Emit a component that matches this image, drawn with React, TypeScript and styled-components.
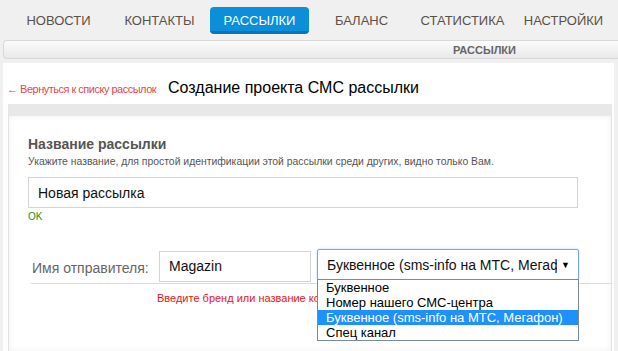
import React from "react";
import styled, { createGlobalStyle } from "styled-components";

const GlobalStyle = createGlobalStyle`
  html, body {
    margin: 0;
    padding: 0;
    background: #f0f0f0;
    font-family: "Liberation Sans", Arial, sans-serif;
    overflow: hidden;
  }
`;

const Page = styled.div`
  width: 618px;
  height: 351px;
  display: flex;
  flex-direction: column;
`;

const Nav = styled.nav`
  display: flex;
  height: 40px;
  padding: 7px 0 0 8px;
  box-sizing: border-box;
`;

const NavItem = styled.a<{ $active?: boolean }>`
  width: ${(p) => (p.$active ? "99px" : "101px")};
  margin-right: ${(p) => (p.$active ? "2px" : "0")};
  height: 27px;
  box-sizing: border-box;
  display: flex;
  align-items: center;
  justify-content: center;
  font-size: 13px;
  text-transform: uppercase;
  color: ${(p) => (p.$active ? "#fff" : "#5a5048")};
  background: ${(p) => (p.$active ? "#0b8fd8" : "transparent")};
  border-bottom: 3px solid ${(p) => (p.$active ? "#0a74b4" : "transparent")};
  border-radius: 4px;
  padding-top: 2px;
`;

const SubBar = styled.div`
  margin: 0 0 4px 3px;
  height: 19px;
  box-sizing: border-box;
  border: 1px solid #d8d8d8;
  border-right: none;
  border-radius: 4px 0 0 4px;
  background: linear-gradient(#fbfbfb, #e9e9e9);
  display: flex;
  align-items: center;
  justify-content: flex-end;
  padding-right: 102px;
  font-size: 11px;
  font-weight: bold;
  color: #666;
`;

const Card = styled.div`
  flex: 1;
  margin: 0 4px 0 3px;
  background: #fff;
  display: flex;
  flex-direction: column;
`;

const CardHead = styled.div`
  display: flex;
  align-items: baseline;
  gap: 12px;
  padding: 16px 0 0 4px;
  height: 41px;
  box-sizing: border-box;
`;

const BackLink = styled.a`
  font-size: 11px;
  letter-spacing: -0.5px;
  color: #e4474b;
`;

const Title = styled.h1`
  margin: 0;
  font-size: 16px;
  font-weight: normal;
  color: #000;
`;

const Panel = styled.div`
  flex: 1;
  margin: 0 2px 0 5px;
  border: 1px solid #e2e2e2;
  border-bottom: none;
  border-top: 12px solid #e8e8e8;
  box-shadow: inset 0 0 6px rgba(0, 0, 0, 0.06);
  padding: 18px 0 0 19px;
  display: flex;
  flex-direction: column;
`;

const FieldTitle = styled.div`
  font-size: 14px;
  font-weight: bold;
  color: #555;
  line-height: 20px;
`;

const Hint = styled.div`
  font-size: 10.4px;
  color: #555;
  margin-top: 2px;
  line-height: 12px;
  white-space: nowrap;
`;

const TextBox = styled.div<{ $w: number }>`
  width: ${(p) => p.$w}px;
  height: 31px;
  box-sizing: border-box;
  border: 1px solid #d4d4d4;
  display: flex;
  align-items: center;
  padding-left: 9px;
  font-size: 14px;
  color: #111;
  background: #fff;
`;

const NameBox = styled(TextBox)`
  margin-top: 9px;
`;

const Ok = styled.div`
  font-size: 10px;
  color: #2a8a2a;
  margin-top: 3px;
`;

const SenderRow = styled.div`
  margin-top: 27px;
  margin-left: 3px;
  display: flex;
  align-items: center;
  height: 34px;
  border-bottom: 1px solid #dcdcdc;
`;

const SenderLabel = styled.div`
  font-size: 14px;
  color: #666;
  width: 127px;
  padding-left: 1px;
  padding-top: 4px;
`;

const SelectWrap = styled.div`
  position: relative;
  margin-left: 6px;
  align-self: flex-start;
`;

const SelectBox = styled.div`
  width: 262px;
  height: 31px;
  box-sizing: border-box;
  border: 1px solid #7ea4e6;
  box-shadow: 0 0 2px #9ec0f5;
  border-radius: 2px;
  display: flex;
  align-items: center;
  justify-content: space-between;
  padding: 0 8px 0 9px;
  font-size: 14px;
  color: #111;
  white-space: nowrap;
  overflow: hidden;
`;

const SelectText = styled.span`
  overflow: hidden;
  width: 230px;
`;

const Arrow = styled.span`
  font-size: 9px;
  color: #000;
`;

const OptionList = styled.ul`
  position: absolute;
  left: 0;
  top: 30px;
  width: 260px;
  margin: 0;
  padding: 0;
  list-style: none;
  border: 1px solid #7a8a99;
  background: #fff;
  z-index: 2;
`;

const Option = styled.li<{ $selected?: boolean }>`
  font-size: 13px;
  line-height: 15px;
  padding-left: 8px;
  white-space: nowrap;
  color: ${(p) => (p.$selected ? "#fff" : "#000")};
  background: ${(p) => (p.$selected ? "#1e90ff" : "#fff")};
`;

const ErrorText = styled.div`
  font-size: 11px;
  color: #e8141c;
  margin: 8px 0 0 129px;
`;

const navItems = ["Новости", "Контакты", "Рассылки", "Баланс", "Статистика", "Настройки"];
const options = [
  "Буквенное",
  "Номер нашего СМС-центра",
  "Буквенное (sms-info на МТС, Мегафон)",
  "Спец канал",
];

export default function App() {
  return (
    <Page>
      <GlobalStyle />
      <Nav>
        {navItems.map((n) => (
          <NavItem key={n} $active={n === "Рассылки"}>
            {n}
          </NavItem>
        ))}
      </Nav>
      <SubBar>РАССЫЛКИ</SubBar>
      <Card>
        <CardHead>
          <BackLink>← Вернуться к списку рассылок</BackLink>
          <Title>Создание проекта СМС рассылки</Title>
        </CardHead>
        <Panel>
          <FieldTitle>Название рассылки</FieldTitle>
          <Hint>
            Укажите название, для простой идентификации этой рассылки среди
            других, видно только Вам.
          </Hint>
          <NameBox $w={550}>Новая рассылка</NameBox>
          <Ok>OK</Ok>
          <SenderRow>
            <SenderLabel>Имя отправителя:</SenderLabel>
            <TextBox $w={152}>Magazin</TextBox>
            <SelectWrap>
              <SelectBox>
                <SelectText>Буквенное (sms-info на МТС, Мегафон)</SelectText>
                <Arrow>▼</Arrow>
              </SelectBox>
              <OptionList>
                {options.map((o, i) => (
                  <Option key={o} $selected={i === 2}>
                    {o}
                  </Option>
                ))}
              </OptionList>
            </SelectWrap>
          </SenderRow>
          <ErrorText>Введите бренд или название компании</ErrorText>
        </Panel>
      </Card>
    </Page>
  );
}
